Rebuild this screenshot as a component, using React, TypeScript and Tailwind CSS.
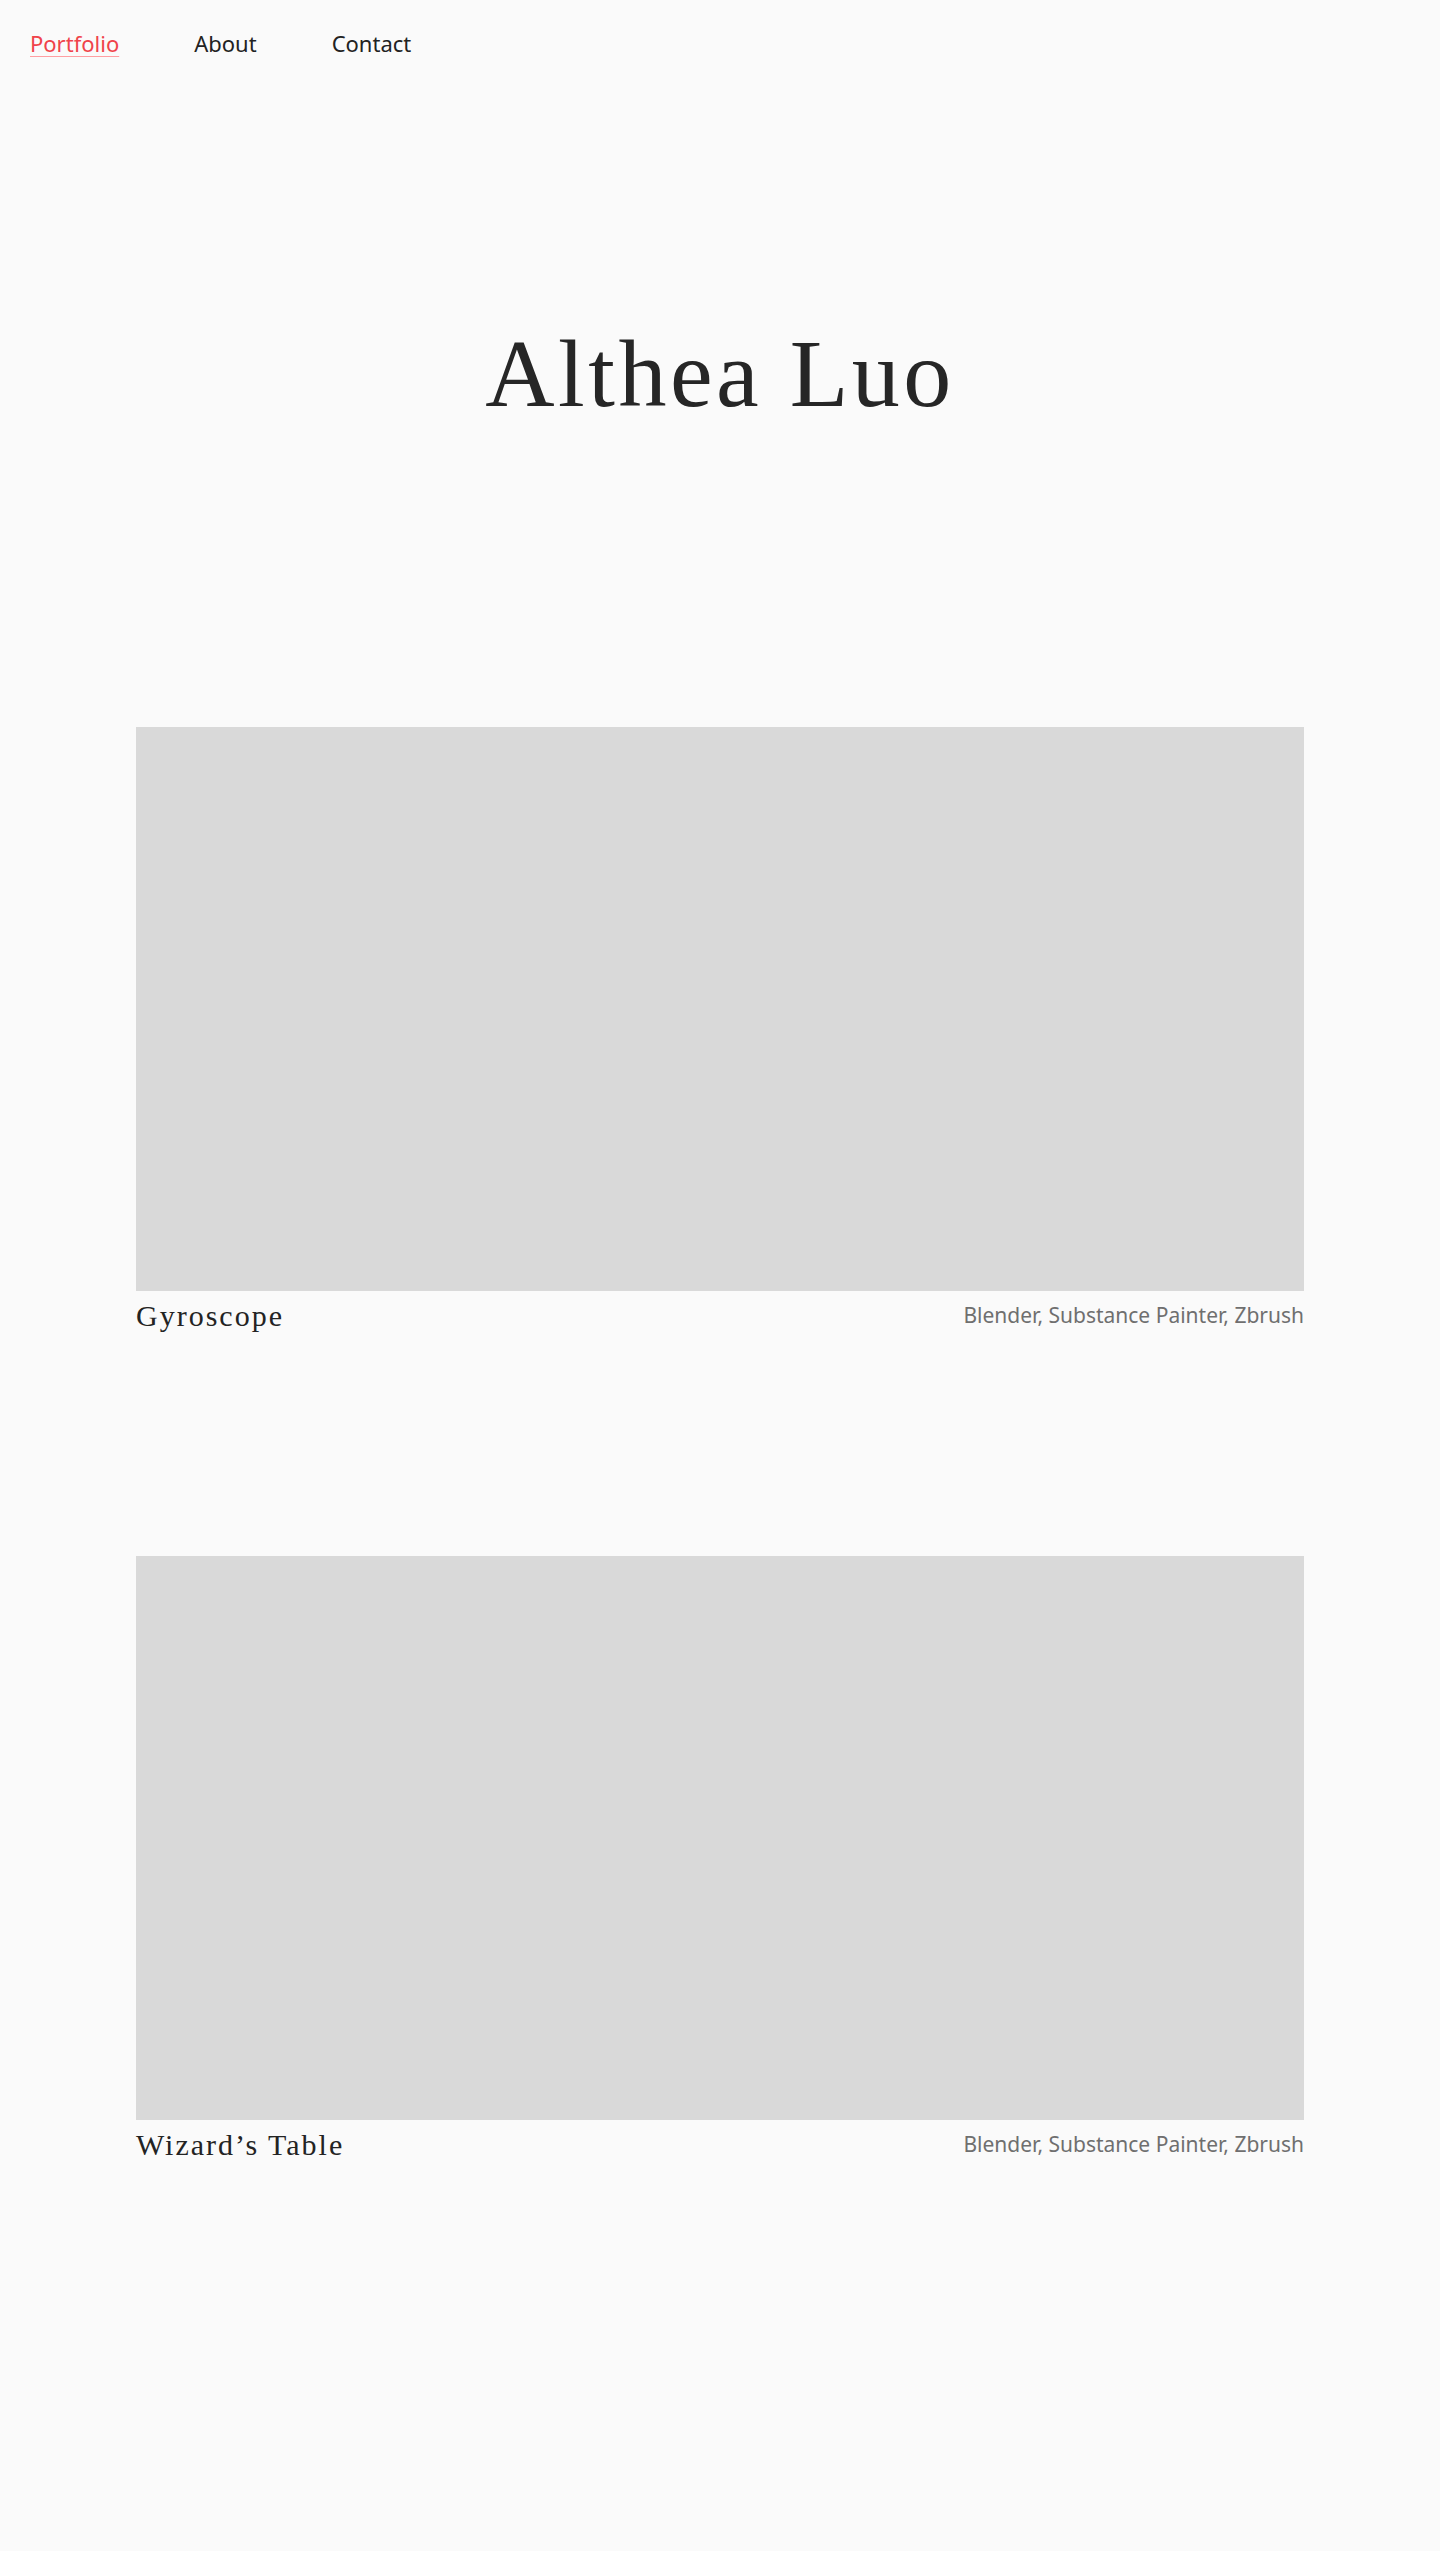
const projects = [
  { title: "Gyroscope", tools: "Blender, Substance Painter, Zbrush" },
  { title: "Wizard\u2019s Table", tools: "Blender, Substance Painter, Zbrush" },
];

const sans = "font-['Noto_Sans',sans-serif]";
const serif = "font-['Liberation_Serif',serif]";

const ProjectCard = ({ title, tools }: { title: string; tools: string }) => (
  <div className="mb-[225px]">
    <div className="h-[564px] w-full bg-[#d9d9d9]" />
    <div className="mt-[10px] flex items-start justify-between">
      <span className={`${serif} text-[30px] leading-[30px] tracking-[2px] text-[#232323]`}>{title}</span>
      <span className={`${sans} mt-[4px] text-[21px] leading-[21px] text-[#6f6f6f]`}>{tools}</span>
    </div>
  </div>
);

export default function App() {
  return (
    <div className="min-h-[2551px] w-full bg-[#fafafa] pb-[176px]">
      <nav className={`${sans} flex gap-[75px] pl-[30px] pt-[28px] text-[22px] leading-[30px] text-[#222]`}>
        <a className="text-[#f0434a] underline decoration-[#ff9fa2] decoration-1 underline-offset-[4px]">Portfolio</a>
        <a>About</a>
        <a>Contact</a>
      </nav>

      <h1 className={`${serif} mt-[268px] text-center text-[96px] leading-[96px] tracking-[3.5px] text-[#262626]`}>
        Althea Luo
      </h1>

      <main className="mx-[136px] mt-[305px]">
        {projects.map((p) => (
          <ProjectCard key={p.title} title={p.title} tools={p.tools} />
        ))}
      </main>
    </div>
  );
}
